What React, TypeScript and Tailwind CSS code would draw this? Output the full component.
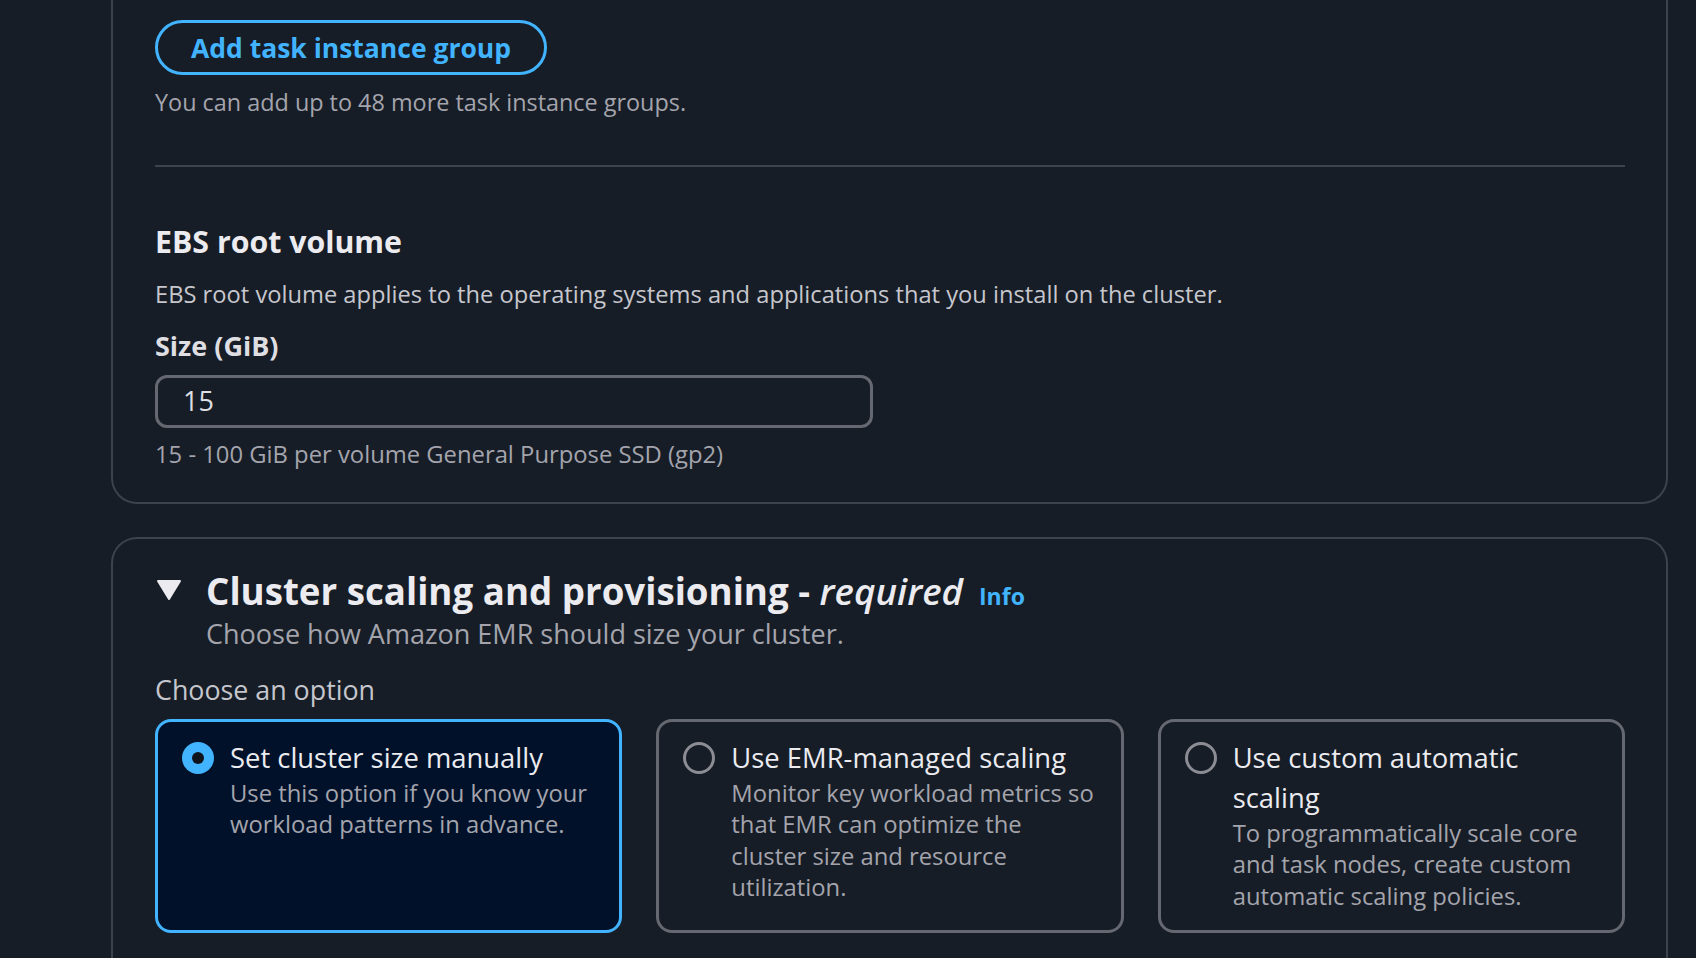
import React from "react";

function Radio({ checked }: { checked: boolean }) {
  if (checked) {
    return (
      <span className="mt-[4px] flex h-[32px] w-[32px] shrink-0 items-center justify-center rounded-full bg-[#42b4ff]">
        <span className="h-[12px] w-[12px] rounded-full bg-[#0f141a]" />
      </span>
    );
  }
  return (
    <span className="mt-[4px] h-[32px] w-[32px] shrink-0 rounded-full border-[3px] border-[#8c8c94]" />
  );
}

function Tile({
  checked,
  title,
  desc,
}: {
  checked: boolean;
  title: string;
  desc: string;
}) {
  return (
    <div
      className={
        checked
          ? "flex gap-[16px] rounded-[16px] border-[3px] border-[#42b4ff] bg-[#001129] pl-[24px] pr-[22px] pt-[16px] pb-[18px]"
          : "flex gap-[16px] rounded-[16px] border-[3px] border-[#656871] bg-[#161d26] pl-[24px] pr-[22px] pt-[16px] pb-[18px]"
      }
    >
      <Radio checked={checked} />
      <div className="flex flex-col">
        <div className="text-[27.4px] leading-[40px] text-[#ebebf0]">{title}</div>
        <div className="text-[23.8px] leading-[31.5px] text-[#a4a4ad]">{desc}</div>
      </div>
    </div>
  );
}

export default function App() {
  return (
    <div className="h-screen w-full overflow-hidden bg-[#161d26] font-['Open_Sans',sans-serif]">
      <div className="pl-[111px] pr-[28px]">
        <div className="rounded-b-[26px] border-2 border-t-0 border-[#3d424c] pl-[42px] pr-[41px] pt-[20px] pb-[32px]">
          <button className="flex h-[55px] w-[392px] items-center justify-center rounded-full border-[3px] border-[#42b4ff] pt-[2px] text-[26.5px] font-bold text-[#42b4ff]">
            Add task instance group
          </button>
          <div className="mt-[11px] text-[23.4px] leading-[32px] text-[#a4a4ad]">
            You can add up to 48 more task instance groups.
          </div>
          <div className="mt-[47px] h-[2px] bg-[#3d424c]" />
          <div className="mt-[57px] text-[30.3px] font-bold leading-[36px] text-[#ebebf0]">
            EBS root volume
          </div>
          <div className="mt-[18px] text-[23.7px] leading-[32px] text-[#c6c6cd]">
            EBS root volume applies to the operating systems and applications that you install on the cluster.
          </div>
          <div className="mt-[20px] text-[27px] font-bold leading-[32px] text-[#dedee3]">
            Size (GiB)
          </div>
          <div className="mt-[13px] flex h-[53px] w-[718px] items-center rounded-[12px] border-[3px] border-[#656871] pl-[25px] text-[27px] text-[#dedee3]">
            15
          </div>
          <div className="mt-[10px] text-[23.8px] leading-[32px] text-[#a4a4ad]">
            15 - 100 GiB per volume General Purpose SSD (gp2)
          </div>
        </div>

        <div className="mt-[33px] rounded-t-[26px] border-2 border-b-0 border-[#3d424c] pl-[42px] pr-[41px] pt-[30px] pb-[200px]">
          <div className="flex">
            <svg width="26" height="22" viewBox="0 0 26 22" className="ml-[1px] mt-[10px] shrink-0">
              <path d="M2 2 L24 2 L13 20 Z" fill="#ebebf0" stroke="#ebebf0" strokeWidth="2" strokeLinejoin="round" />
            </svg>
            <div className="ml-[24px] flex flex-col">
              <div className="flex items-baseline">
                <span className="text-[36.7px] font-bold leading-[44px] text-[#ebebf0]">
                  Cluster scaling and provisioning - <i className="font-semibold">required</i>
                </span>
                <span className="ml-[16px] text-[23px] font-bold text-[#42b4ff]">Info</span>
              </div>
              <div className="mt-[4px] text-[27px] leading-[32px] text-[#a4a4ad]">
                Choose how Amazon EMR should size your cluster.
              </div>
            </div>
          </div>
          <div className="mt-[24px] text-[26.8px] leading-[32px] text-[#c6c6cd]">Choose an option</div>
          <div className="mt-[13px] grid grid-cols-3 gap-[34px]">
            <Tile
              checked
              title="Set cluster size manually"
              desc="Use this option if you know your workload patterns in advance."
            />
            <Tile
              checked={false}
              title="Use EMR-managed scaling"
              desc="Monitor key workload metrics so that EMR can optimize the cluster size and resource utilization."
            />
            <Tile
              checked={false}
              title="Use custom automatic scaling"
              desc="To programmatically scale core and task nodes, create custom automatic scaling policies."
            />
          </div>
        </div>
      </div>
    </div>
  );
}
